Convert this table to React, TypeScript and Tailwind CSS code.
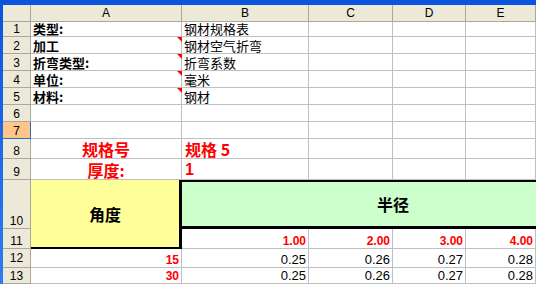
import React from 'react';

const cjk = "font-['Noto_Sans_CJK_SC',sans-serif]";
const num = "font-['Liberation_Sans',Arial,sans-serif]";
const grid = 'border-r border-b border-[#c0c0c0]';

const RowHead: React.FC<{ n: number; active?: boolean; className?: string }> = ({ n, active, className = 'items-end pb-[1px]' }) => (
   <div
      className={`flex justify-center text-[12px] leading-none text-black ${num} ${className} ${
         active ? 'bg-[#ffc58b] border-r border-b border-[#316ac5]' : 'bg-[#ece9d8] border-r border-b border-[#aca899]'
      }`}
   >
      {n}
   </div>
);

const Cell: React.FC<{ className?: string; children?: React.ReactNode; note?: boolean }> = ({ className = '', children, note }) => (
   <div className={`relative flex items-end pb-[1px] bg-white ${grid} ${className}`}>
      {children}
      {note && <span className="absolute top-0 right-[-1px] w-0 h-0 border-t-[5px] border-t-[#ff0000] border-l-[5px] border-l-transparent" />}
   </div>
);

const Label: React.FC<{ text: string; value: string; note?: boolean; n: number }> = ({ text, value, note, n }) => (
   <>
      <RowHead n={n} />
      <Cell note={note} className={`pl-[2px] text-[13px] leading-none font-bold text-black ${cjk}`}>{text}</Cell>
      <Cell className={`pl-[2px] text-[13px] leading-none text-black ${cjk}`}>{value}</Cell>
      <Cell />
      <Cell />
      <Cell />
   </>
);

export default function App() {
   return (
      <div className="w-[536px] h-[284px] overflow-hidden bg-gradient-to-b from-[#0a54dd] to-[#2e7cf2] pl-[3px] pt-[5px]">
         <div className="grid grid-cols-[28px_151px_127px_84px_73px_70px] grid-rows-[17px_15px_17px_17px_17px_17px_17px_17px_20px_21px_49px_20px_19px_16px] bg-white">
            {/* column headers */}
            <div className="bg-[#ece9d8] border-r border-b border-[#aca899]" />
            {['A', 'B', 'C', 'D', 'E'].map((c) => (
               <div key={c} className={`flex items-center justify-center bg-[#ece9d8] border-r border-b border-[#aca899] text-[12px] text-black ${num}`}>
                  {c}
               </div>
            ))}

            <Label n={1} text="类型:" value="钢材规格表" />
            <Label n={2} text="加工" value="钢材空气折弯" note />
            <Label n={3} text="折弯类型:" value="折弯系数" note />
            <Label n={4} text="单位:" value="毫米" note />
            <Label n={5} text="材料:" value="钢材" note />

            <RowHead n={6} />
            <Cell /><Cell /><Cell /><Cell /><Cell />
            <RowHead n={7} active />
            <Cell /><Cell /><Cell /><Cell /><Cell />

            <RowHead n={8} />
            <Cell className={`justify-center items-center text-[16px] leading-none font-bold text-[#ff0000] ${cjk}`}>规格号</Cell>
            <Cell className={`pl-[3px] items-center text-[16px] leading-none font-bold text-[#ff0000] ${cjk}`}>规格 5</Cell>
            <Cell /><Cell /><Cell />

            <RowHead n={9} />
            <Cell className={`justify-center items-center text-[16px] leading-none font-bold text-[#ff0000] ${cjk}`}>厚度:</Cell>
            <Cell className={`pl-[3px] items-center text-[16px] leading-none font-bold text-[#ff0000] ${num}`}>1</Cell>
            <Cell /><Cell /><Cell />

            <RowHead n={10} />
            <div className={`row-span-2 flex items-center justify-center bg-[#ffff99] border-r-[3px] border-b-2 border-black text-[16px] font-bold text-black ${cjk}`}>
               角度
            </div>
            <div className={`col-span-4 flex items-center pl-[195px] bg-[#ccffcc] border-t-2 border-b-[3px] border-black text-[16px] font-bold text-black ${cjk}`}>
               半径
            </div>

            <RowHead n={11} />
            {['1.00', '2.00', '3.00', '4.00'].map((v) => (
               <Cell key={v} className={`justify-end pr-[2px] text-[12px] leading-none font-bold text-[#ff0000] ${num}`}>{v}</Cell>
            ))}

            <RowHead n={12} className="items-center" />
            <Cell className={`justify-end items-center pb-0 pr-[2px] text-[12px] leading-none font-bold text-[#ff0000] ${num}`}>15</Cell>
            {['0.25', '0.26', '0.27', '0.28'].map((v) => (
               <Cell key={v} className={`justify-end items-center pb-0 pr-[2px] text-[13px] leading-none text-black ${num}`}>{v}</Cell>
            ))}

            <RowHead n={13} className="items-center" />
            <Cell className={`justify-end items-center pb-0 pr-[2px] text-[12px] leading-none font-bold text-[#ff0000] ${num}`}>30</Cell>
            {['0.25', '0.26', '0.27', '0.28'].map((v) => (
               <Cell key={v} className={`justify-end items-center pb-0 pr-[2px] text-[13px] leading-none text-black ${num}`}>{v}</Cell>
            ))}
         </div>
      </div>
   );
}
